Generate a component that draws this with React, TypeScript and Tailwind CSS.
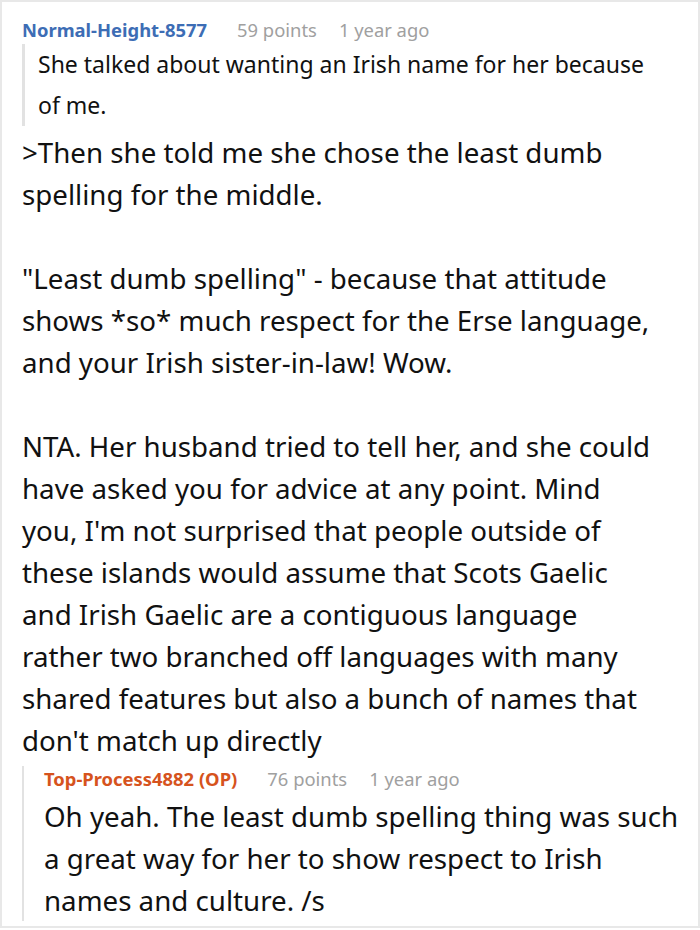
import React from "react";

const font = { fontFamily: '"Noto Sans", "Open Sans", sans-serif' };

const ntaLines = [
  "NTA. Her husband tried to tell her, and she could",
  "have asked you for advice at any point. Mind",
  "you, I'm not surprised that people outside of",
  "these islands would assume that Scots Gaelic",
  "and Irish Gaelic are a contiguous language",
  "rather two branched off languages with many",
  "shared features but also a bunch of names that",
  "don't match up directly",
];

export default function App() {
  return (
    <div className="w-[700px] h-[930px] bg-white" style={font}>
      <div className="h-[928px] border-2 border-[#e8e8e8] overflow-hidden text-[#111]">
        <div className="pl-[20px] pr-[17px] pt-[15px]">
          <div className="flex items-baseline h-[26px] text-[18.4px] leading-[26px]">
            <span className="font-bold text-[#3d6db5]">Normal-Height-8577</span>
            <span className="ml-[30px] text-[#a0a0a0]">59 points</span>
            <span className="ml-[22px] text-[#a0a0a0]">1 year ago</span>
          </div>
          <div className="mt-[1px] mr-[20px] border-l-[3px] border-[#e2e2e2] pl-[13px] text-[23px] leading-[41px]">
            She talked about wanting an Irish name for her because of me.
          </div>
          <div className="mt-[5px] mr-[5px] text-[27.7px] leading-[42px]">
            <p>&gt;Then she told me she chose the least dumb spelling for the middle.</p>
            <p className="mt-[42px]">
              "Least dumb spelling" - because that attitude shows *so* much respect for the Erse language, and your Irish sister-in-law! Wow.
            </p>
            <p className="mt-[42px] whitespace-nowrap">
              {ntaLines.map((l, i) => (
                <React.Fragment key={i}>
                  {l}
                  {i < ntaLines.length - 1 && <br />}
                </React.Fragment>
              ))}
            </p>
          </div>
          <div className="mt-[5px] border-l-[2px] border-[#e2e2e2] pl-[20px]">
            <div className="flex items-baseline h-[26px] text-[18.4px] leading-[26px]">
              <span className="font-bold text-[#d6531d]">Top-Process4882 (OP)</span>
              <span className="ml-[30px] text-[#a0a0a0]">76 points</span>
              <span className="ml-[22px] text-[#a0a0a0]">1 year ago</span>
            </div>
            <div className="mt-[3px] text-[27.7px] leading-[42px]">
              Oh yeah. The least dumb spelling thing was such a great way for her to show respect to Irish names and culture. /s
            </div>
          </div>
        </div>
      </div>
    </div>
  );
}
